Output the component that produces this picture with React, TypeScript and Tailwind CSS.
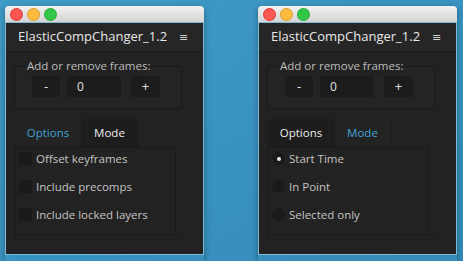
import { useState } from "react";

const font = { fontFamily: '"Open Sans", "DejaVu Sans", sans-serif' };

function Window({ tab }: { tab: "options" | "mode" }) {
  const [active, setActive] = useState(tab);
  const [radio, setRadio] = useState(0);

  return (
    <div className="flex w-[199px] flex-col shadow-[0_2px_6px_rgba(0,0,0,0.35)]">
      {/* title bar */}
      <div className="flex h-[16px] items-center gap-[6px] rounded-t-[4px] bg-gradient-to-b from-[#f2f2f2] to-[#d4d4d4] pl-[6px]">
        <span className="h-[11px] w-[11px] rounded-full bg-[#fc5753] ring-1 ring-[#df3d39]" />
        <span className="h-[11px] w-[11px] rounded-full bg-[#fdbc40] ring-1 ring-[#de9e28]" />
        <span className="h-[11px] w-[11px] rounded-full bg-[#33c748] ring-1 ring-[#27aa35]" />
      </div>
      {/* panel */}
      <div className="flex h-[233px] flex-col border border-[#7fb9d8] bg-[#222222]">
        <div className="flex h-[29px] items-center border-b border-[#1a1a1a] bg-[#262626] pl-[12px] text-[13px] text-[#e8e8e8]">
          <span>ElasticCompChanger_1.2</span>
          <span className="ml-[12px] text-[11px] text-[#cfcfcf]">≡</span>
        </div>

        <div className="flex flex-col pl-[8px] pr-[21px] pt-[8px] text-[11.5px]">
          {/* frames group */}
          <div className="relative mt-[6px] h-[43px] rounded-[2px] border border-[#1a1a1a] bg-[#242424]">
            <span className="absolute left-[11px] top-[-10px] bg-[#222222] px-[1px] leading-[18px] text-[#bdbdbd]">
              Add or remove frames:
            </span>
            <div className="mt-[9px] flex items-center pl-[17px]">
              <button className="flex h-[21px] w-[28px] items-center justify-center bg-[#1c1c1c] text-[13px] text-[#e0e0e0]">
                -
              </button>
              <div className="ml-[7px] flex h-[21px] w-[54px] items-center bg-[#1c1c1c] pl-[10px] text-[12px] text-[#e0e0e0]">
                0
              </div>
              <button className="ml-[10px] flex h-[21px] w-[29px] items-center justify-center bg-[#1c1c1c] text-[13px] text-[#e0e0e0]">
                +
              </button>
            </div>
          </div>

          {/* tabs */}
          <div className="mt-[10px] flex h-[121px] w-[168px] flex-col border border-[#1e1e1e] border-t-0">
            <div className="flex h-[28px]">
              <button
                onClick={() => setActive("options")}
                className={`flex w-[67px] items-center justify-center border-r border-[#1a1a1a] ${
                  active === "options" ? "bg-[#232323] text-[#3fa3d6]" : "bg-[#1d1d1d] text-[#ececec]"
                }`}
              >
                Options
              </button>
              <button
                onClick={() => setActive("mode")}
                className={`flex w-[56px] items-center justify-center border-r border-[#1a1a1a] ${
                  active === "mode" ? "bg-[#232323] text-[#3fa3d6]" : "bg-[#1d1d1d] text-[#ececec]"
                }`}
              >
                Mode
              </button>
            </div>
            <div className="flex h-[88px] w-[161px] flex-col gap-[15px] border border-[#1a1a1a] pl-[3px] pt-[4px] text-[#c4c4c4]">
              {active === "options"
                ? ["Offset keyframes", "Include precomps", "Include locked layers"].map((t) => (
                    <div key={t} className="flex h-[13px] items-center gap-[4px]">
                      <span className="h-[13px] w-[13px] bg-[#1a1a1a]" />
                      <span>{t}</span>
                    </div>
                  ))
                : ["Start Time", "In Point", "Selected only"].map((t, i) => (
                    <div
                      key={t}
                      onClick={() => setRadio(i)}
                      className="flex h-[13px] items-center gap-[4px]"
                    >
                      <span className="flex h-[13px] w-[13px] items-center justify-center rounded-full bg-[#1a1a1a]">
                        {radio === i && <span className="h-[4px] w-[4px] rounded-full bg-[#e8e8e8]" />}
                      </span>
                      <span>{t}</span>
                    </div>
                  ))}
            </div>
          </div>
        </div>
      </div>
    </div>
  );
}

export default function App() {
  return (
    <div
      style={font}
      className="flex h-[261px] w-[463px] gap-[54px] bg-[#3a95c3] bg-gradient-to-br from-[#3f9bc8] to-[#338bb8] pl-[5px] pt-[6px]"
    >
      <Window tab="options" />
      <Window tab="mode" />
    </div>
  );
}
